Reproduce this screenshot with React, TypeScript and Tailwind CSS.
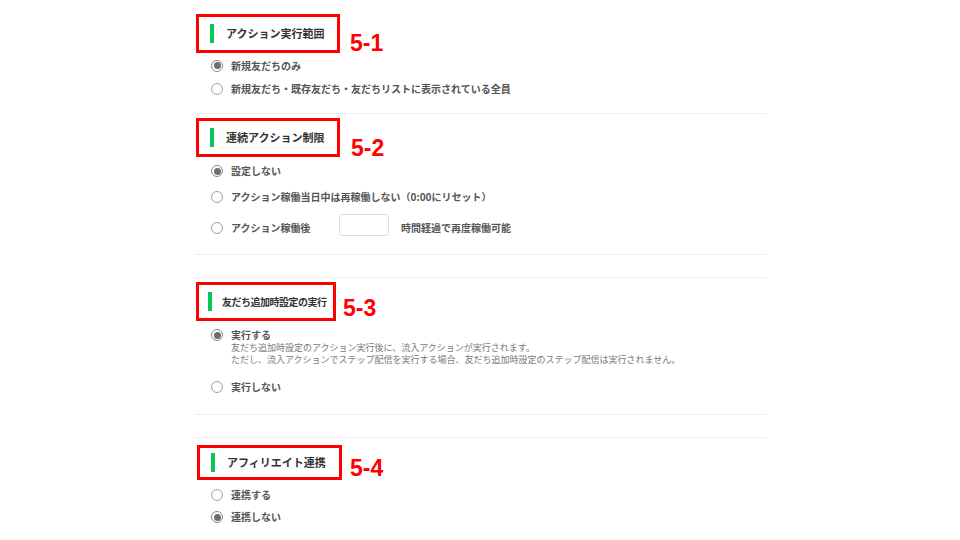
import React from "react";

function Radio({ checked }: { checked?: boolean }) {
  return checked ? (
    <span className="flex h-[12px] w-[12px] shrink-0 items-center justify-center rounded-full border border-[#8a8a8a] bg-white">
      <span className="h-[7px] w-[7px] rounded-full bg-[#6e6e6e]" />
    </span>
  ) : (
    <span className="h-[12px] w-[12px] shrink-0 rounded-full border border-[#a0a0a0] bg-white" />
  );
}

function Title({
  text,
  label,
  rowClass,
  boxClass,
  textClass = "ml-[12px] text-[11px]",
  labelClass,
}: {
  text: string;
  label: string;
  rowClass: string;
  boxClass: string;
  textClass?: string;
  labelClass: string;
}) {
  return (
    <div className={"flex items-start " + rowClass}>
      <div
        className={
          "flex shrink-0 items-center border-[3px] border-[#ff0000] " + boxClass
        }
      >
        <span className="h-[19px] w-[4px] shrink-0 bg-[#06c755]" />
        <span
          className={
            "whitespace-nowrap font-bold leading-none text-[#333333] " + textClass
          }
        >
          {text}
        </span>
      </div>
      <span
        className={
          "whitespace-nowrap font-['Liberation_Sans',Arial,sans-serif] text-[23px] font-bold leading-none text-[#ff0000] " +
          labelClass
        }
      >
        {label}
      </span>
    </div>
  );
}

function Option({
  checked,
  children,
  className = "",
}: {
  checked?: boolean;
  children: React.ReactNode;
  className?: string;
}) {
  return (
    <div className={"flex items-center pl-[16px] " + className}>
      <Radio checked={checked} />
      <span className="ml-[8px] whitespace-nowrap text-[10px] font-bold leading-none text-[#555555]">
        {children}
      </span>
    </div>
  );
}

export default function App() {
  return (
    <div className="h-[540px] w-[960px] overflow-hidden bg-white font-['Noto_Sans_CJK_JP',sans-serif]">
      <div className="ml-[195px] w-[571px]">
        {/* 5-1 */}
        <section className="border-b border-[#eeeeee] pb-[13px] pt-[14px]">
          <Title
            text="アクション実行範囲"
            label="5-1"
            rowClass="h-[39px]"
            boxClass="ml-px h-[39px] w-[144px] pl-[11px]"
            labelClass="ml-[10px] mt-[18px]"
          />
          <Option checked className="mt-px h-[23px]">
            新規友だちのみ
          </Option>
          <Option className="h-[23px]">
            新規友だち・既存友だち・友だちリストに表示されている全員
          </Option>
        </section>

        {/* 5-2 */}
        <section className="border-b border-[#eeeeee] pb-[15px] pt-[4px]">
          <Title
            text="連続アクション制限"
            label="5-2"
            rowClass="h-[39px]"
            boxClass="ml-px h-[39px] w-[144px] pl-[11px]"
            labelClass="ml-[11px] mt-[19px]"
          />
          <Option checked className="mt-[3px] h-[22px]">
            設定しない
          </Option>
          <Option className="mt-[4px] h-[22px]">
            アクション稼働当日中は再稼働しない（0:00にリセット）
          </Option>
          <div className="mt-[6px] flex items-start pl-[16px]">
            <div className="mt-[3px] flex h-[22px] items-center">
              <Radio />
              <span className="ml-[8px] w-[108px] whitespace-nowrap text-[10px] font-bold leading-none text-[#555555]">
                アクション稼働後
              </span>
            </div>
            <div className="h-[22px] w-[50px] rounded-[3px] border border-[#dddddd] bg-white" />
            <div className="ml-[12px] mt-[3px] flex h-[22px] items-center whitespace-nowrap text-[10px] font-bold leading-none text-[#555555]">
              時間経過で再度稼働可能
            </div>
          </div>
        </section>

        {/* 5-3 */}
        <section className="mt-[22px] border-b border-t border-[#eeeeee] pb-[20px] pt-[4px]">
          <Title
            text="友だち追加時設定の実行"
            label="5-3"
            rowClass="h-[39px]"
            boxClass="ml-px h-[39px] w-[140px] pl-[9px]"
            textClass="ml-[10px] text-[10px] tracking-[-0.5px]"
            labelClass="ml-[7px] mt-[15px]"
          />
          <Option checked className="mt-[7px] h-[14px]">
            実行する
          </Option>
          <div className="pl-[36px] text-[9px] leading-[12px] text-[#7a7a7a]">
            <div>友だち追加時設定のアクション実行後に、流入アクションが実行されます。</div>
            <div className="whitespace-nowrap">
              ただし、流入アクションでステップ配信を実行する場合、友だち追加時設定のステップ配信は実行されません。
            </div>
          </div>
          <Option className="mt-[14px] h-[14px]">実行しない</Option>
        </section>

        {/* 5-4 */}
        <section className="mt-[22px] border-t border-[#eeeeee] pt-[7px]">
          <Title
            text="アフィリエイト連携"
            label="5-4"
            rowClass="h-[35px]"
            boxClass="ml-[2px] h-[35px] w-[145px] pl-[11px]"
            labelClass="ml-[8px] mt-[12px]"
          />
          <Option className="mt-[4px] h-[22px]">連携する</Option>
          <Option checked className="h-[22px]">
            連携しない
          </Option>
        </section>
      </div>
    </div>
  );
}
